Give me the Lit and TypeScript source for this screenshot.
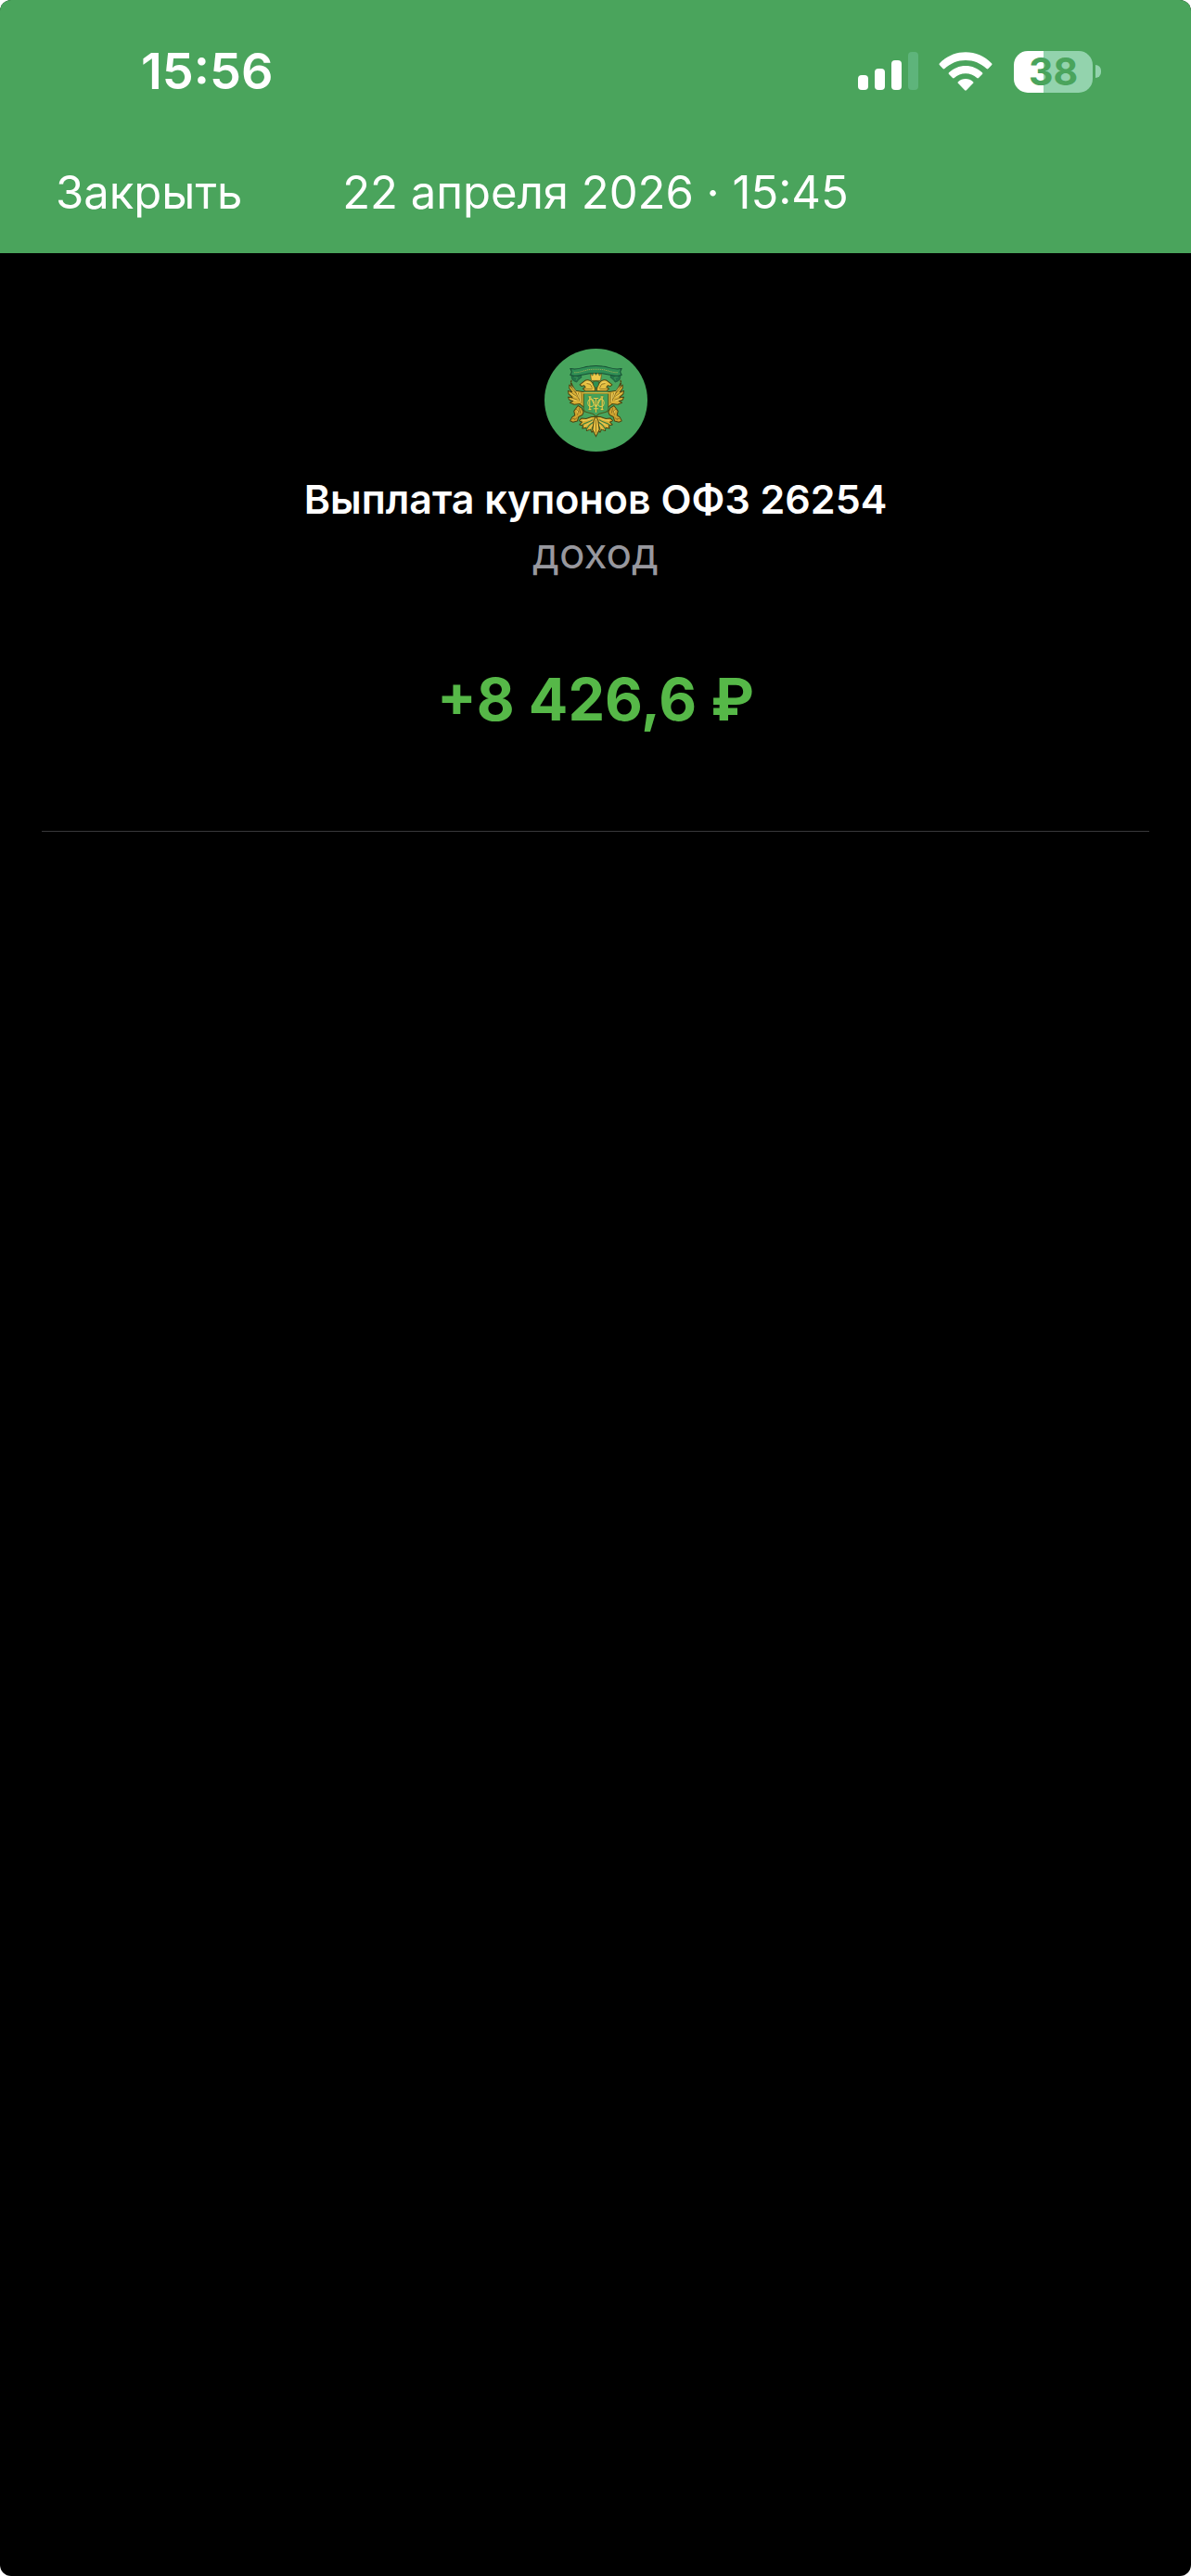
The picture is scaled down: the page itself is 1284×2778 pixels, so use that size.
import { LitElement, html, css, svg } from 'lit';
import { customElement, property } from 'lit/decorators.js';

@customElement('status-bar')
export class StatusBar extends LitElement {
    static styles = css`
        :host {
            display: flex;
            justify-content: space-between;
            align-items: center;
            padding: 0 97px 0 152px;
            line-height: 64px;
        }

        .time {
            font-size: 54px;
            font-weight: 600;
        }

        .indicators {
            display: flex;
            align-items: center;
        }

        .signal {
            width: 65px;
            height: 42px;
            margin-right: 22px;
        }

        .wifi {
            width: 58px;
            height: 42px;
            margin-right: 23px;
        }

        .battery {
            width: 85px;
            height: 45px;
            border-radius: 15px;
            color: #4aa45c;
            font-size: 41px;
            font-weight: 700;
            line-height: 45px;
            text-align: center;
        }

        .cap {
            width: 6px;
            height: 14px;
            margin-left: 3px;
            border-radius: 0 6px 6px 0;
            background: #93d3ad;
        }
    `;

    @property() time = '';
    @property({ type: Number }) charge = 0;

    render() {
        return html`
            <span class="time">${this.time}</span>
            <div class="indicators">
                <svg class="signal" viewBox="0 0 65 42" fill="#fff" aria-hidden="true">
                    <rect x="0" y="25" width="11" height="16" rx="4" />
                    <rect x="18" y="18" width="11" height="23" rx="4" />
                    <rect x="36" y="9" width="11" height="32" rx="4" />
                    <rect x="54" y="0" width="11" height="41" rx="4" fill="#5eb47b" />
                </svg>
                <svg class="wifi" viewBox="0 0 58 42" fill="#fff" aria-hidden="true">
                    <path d="M1 12.2C8.500 4.600 18.300 0.300 29 0.300S49.500 4.600 57 12.200q1 1 0 2l-3.600 3.800q-.9.900-1.800 0C45.400 12.300 37.600 9 29 9S12.600 12.300 6.400 18q-.9.900-1.800 0L1 14.200q-1-1 0-2z" />
                    <path d="M11 22.300C15.900 17.600 22.200 15 29 15s13.100 2.600 18 7.300q.9.900 0 1.800l-4 4q-.9.900-1.800 0C37.900 25 33.600 23.300 29 23.300S20.100 25 16.800 28.100q-.9.900-1.800 0l-4-4q-.9-.9 0-1.800z" />
                    <path d="M20.900 32.200C23.200 30.200 26 29 29 29s5.800 1.200 8.100 3.200q.8.800 0 1.600l-7.200 7.400q-.9.900-1.800 0l-7.200-7.400q-.8-.8 0-1.600z" />
                </svg>
                <span
                    class="battery"
                    style="background: linear-gradient(to right, #fff ${this.charge}%, #93d3ad ${this.charge}%)"
                >${this.charge}</span>
                <span class="cap"></span>
            </div>
        `;
    }
}

@customElement('issuer-logo')
export class IssuerLogo extends LitElement {
    static styles = css`
        :host {
            display: block;
            width: 111px;
            height: 111px;
        }

        svg {
            display: block;
            width: 100%;
            height: 100%;
        }
    `;

    // left half of the eagle, the right one is its mirror
    half() {
        return svg`
            <g stroke="#4b4312" stroke-width="3" stroke-linejoin="round">
                <path fill="#d9b035" d="M105 126l7 17 8 12 28 5v50l-14-12-18 2-14-6 10-5-12-4-4-9 14 1-12-11-2-10 13 4-9-12v-11l11 8-6-12 2-11z" />
                <path fill="#e6c042" d="M148 125c7-6 18-5 24 2l9 12 3 18h-32l-8-8 8-5-4-5-9 2-5-5z" />
                <path fill="#d0a430" d="M128 204l12 8 6 12-4 10-12 6-4 13-14 4-9-4 6-12 9-6-3-14z" />
                <path fill="#d9b035" d="M172 240l-18 6-14-2-8 8 9 5-8 8 12 3-3 9 13-2 1 10 12-5 5 10 9-11 4-16v-23z" />
            </g>
            <g fill="none" stroke="#70591a" stroke-width="2">
                <path d="M104 142l18 22M101 158l22 16M102 177l24 8M118 153l12 28M129 163l4 26M139 162v34" />
                <path d="M120 214l10 8-4 12M132 212l4 16M116 250l10-8M110 247l8-2" />
                <path d="M156 132l12 3 6 12M150 150h24" />
            </g>
            <g fill="none" stroke="#2f7d45" stroke-width="3" stroke-linecap="round">
                <path d="M174 250c-8 6-22 9-31 15M177 257c-9 6-17 13-21 23M181 264c-5 6-8 12-9 20" />
            </g>
            <g fill="none" stroke="#f6dc70" stroke-width="2">
                <path d="M107 140l14 17M104 164l18 12M106 183l18 5M124 158l8 22M134 164l2 28" />
                <path d="M172 245c-10 5-18 6-30 7M176 254c-8 6-18 9-27 17M179 261c-6 6-11 12-14 20M124 218l4 10M154 128l12 1 7 8" />
            </g>
            <path d="M107 105l15 3 14-3 4 7-10 8-6 8-10-4-6-8z" fill="#23754a" stroke="#174e35" stroke-width="2" />
            <path d="M116 111l10 2-3 8" fill="none" stroke="#46a45c" stroke-width="2" />
        `;
    }

    render() {
        return html`
            <svg viewBox="20 20 332 332" role="img" aria-label="ОФЗ">
                <circle cx="186" cy="186" r="166" fill="#47a45d" />
                <g>${this.half()}</g>
                <g transform="translate(372 0) scale(-1 1)">${this.half()}</g>
                <path d="M186 238l7 14 4 30-5 9-6 12-6-12-5-9 4-30z" fill="#e6c042" stroke="#4b4312" stroke-width="3" />
                <path d="M186 250v42" fill="none" stroke="#70591a" stroke-width="2" />
                <path d="M103 84l14 2c18 0 28-7 48-9q21-3 42 0c20 2 30 9 48 9l14-2-5 11 5 10-15 3c-18 0-30-6-48-8q-20-2-40 0c-18 2-30 8-48 8l-15-3 5-10z" fill="#2f8f55" stroke="#174e35" stroke-width="3" stroke-linejoin="round" />
                <path d="M116 97c24 0 30-8 54-10q16-1 32 0c24 2 30 10 54 10" fill="none" stroke="#8fae55" stroke-width="3" stroke-dasharray="4 2" />
                <path d="M168 101l7 6 5-9 6 7 6-7 5 9 7-6-3 22h-30z" fill="#edc94b" stroke="#5c4c17" stroke-width="2" />
                <path d="M176 127q10-5 20 0l-2 12-8 10-8-10z" fill="#2f9052" stroke="#4b4312" stroke-width="2" />
                <path d="M146 164h80v49q0 10-10 12l-20 5-10 9-10-9-20-5q-10-2-10-12z" fill="#43a15a" stroke="#4b5a1c" stroke-width="3" />
                <path d="M144 163h84" stroke="#e6c042" stroke-width="4" />
                <g fill="none" stroke="#3c6e2c" stroke-width="6">
                    <path d="M166 174v43M206 174v43M186 176v48M162 175h9M201 175h9M162 216h9M201 216h9" />
                </g>
                <g fill="none" stroke="#e2cb4e" stroke-width="4">
                    <path d="M166 175v41M206 175v41M186 178v48M162 175h9M201 175h9M162 216h9M201 216h9" />
                    <path d="M168 177l18 32 18-32M178 180h16M178 214h16" stroke-width="3" />
                    <ellipse cx="170" cy="195" rx="10" ry="12" stroke-width="3" />
                    <ellipse cx="202" cy="195" rx="10" ry="12" stroke-width="3" />
                </g>
            </svg>
        `;
    }
}

@customElement('app-root')
export class AppRoot extends LitElement {
    static styles = css`
        :host {
            display: block;
            min-height: 100vh;
            overflow: hidden;
            border-radius: 12px;
            background: #000;
            color: #fff;
            font-family: Inter, 'Liberation Sans', sans-serif;
        }

        header {
            padding: 45px 0 35px;
            background: #4aa45c;
        }

        nav {
            display: grid;
            grid-template-columns: 1fr auto 1fr;
            align-items: center;
            margin-top: 69px;
            padding: 0 60px;
            font-size: 49px;
            line-height: 60px;
        }

        .close {
            justify-self: start;
            padding: 0;
            border: 0;
            background: none;
            color: inherit;
            font: inherit;
            cursor: pointer;
        }

        .date {
            margin: 0;
            font: inherit;
        }

        .operation {
            display: flex;
            flex-direction: column;
            align-items: center;
            margin: 0 45px;
            padding: 103px 0 104px;
            border-bottom: 1px solid #38383a;
            text-align: center;
        }

        .name {
            margin: 25px 0 4px;
            font-size: 43px;
            font-weight: 600;
            line-height: 52px;
        }

        .kind {
            margin: 0;
            color: #98989e;
            font-size: 46px;
            line-height: 56px;
        }

        .amount {
            margin: 92px 0 0;
            color: #56b848;
            font-size: 63px;
            font-weight: 700;
            line-height: 76px;
        }
    `;

    @property() date = '22 апреля 2026 · 15:45';
    @property() name = 'Выплата купонов ОФЗ 26254';
    @property() kind = 'доход';
    @property() amount = '+8 426,6 ₽';

    render() {
        return html`
            <header>
                <status-bar time="15:56" charge="38"></status-bar>
                <nav>
                    <button class="close" type="button">Закрыть</button>
                    <h1 class="date">${this.date}</h1>
                </nav>
            </header>
            <main class="operation">
                <issuer-logo></issuer-logo>
                <h2 class="name">${this.name}</h2>
                <p class="kind">${this.kind}</p>
                <p class="amount">${this.amount}</p>
            </main>
        `;
    }
}
